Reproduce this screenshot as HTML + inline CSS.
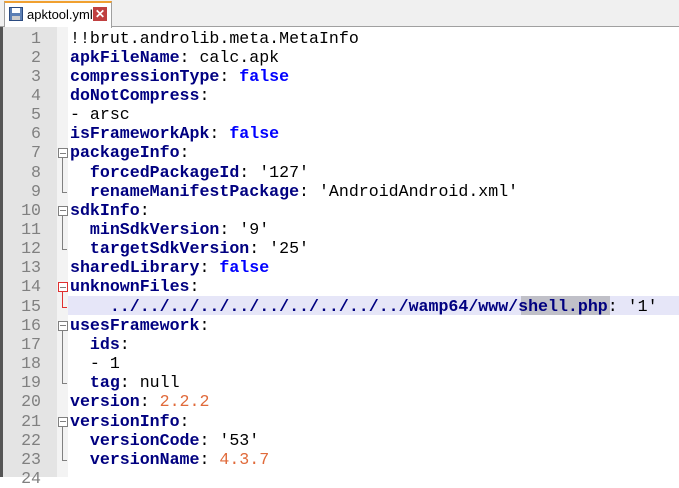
<!DOCTYPE html>
<html><head><style>
body{margin:0;width:679px;height:477px;overflow:hidden;background:#fff;position:relative;font-family:"Liberation Mono",monospace}
.tabbar{position:absolute;left:0;top:0;width:679px;height:26px;background:#f0f0f0;border-bottom:1px solid #a0a0a0}
.tab{position:absolute;left:4px;top:1px;width:106px;height:25px;background:#fff;border:1px solid #a0a0a0;border-bottom:none;border-top:2px solid #f0a030;font:13px "Liberation Sans",sans-serif}
.ed{position:absolute;left:0;top:27px;width:679px;height:450px;border-left:3px solid #555;box-sizing:border-box}
.gut{position:absolute;left:3px;top:27px;width:54px;height:450px;background:#e4e4e4}
.fold{position:absolute;left:57px;top:27px;width:11px;height:450px;background:#f3f3f3}
.ln{position:absolute;left:3px;width:38px;text-align:right;color:#808080;font-size:16.6px}
.tx{position:absolute;left:70px;font-size:16.6px;white-space:pre;color:#000}
.k{color:#000080;font-weight:bold}
.b{color:#0000ff;font-weight:bold}
.n{color:#e06a3a}
.fb{position:absolute;left:58px;width:8px;height:8px;border:1px solid #808080;background:#fff}
.fb::after{content:"";position:absolute;left:1px;top:3.5px;width:6px;height:1px;background:#808080}
.vl{position:absolute;left:62px;width:1px;background:#808080}
.hl{position:absolute;left:62px;width:5px;height:1px;background:#808080}
</style></head><body>
<div class="tabbar"><div class="tab">
<svg style="position:absolute;left:4px;top:4px" width="14" height="14"><rect x="0.5" y="0.5" width="13" height="13" fill="#5b7fb5" stroke="#2a4a80"/><rect x="3" y="1" width="8" height="5" fill="#fff"/><rect x="3" y="9" width="8" height="4" fill="#ccc"/></svg>
<span style="position:absolute;left:22px;top:4px">apktool.yml</span>
<span style="position:absolute;left:88px;top:4px;width:14px;height:14px;background:#c04040;color:#fff;font-size:12px;line-height:14px;text-align:center;font-weight:bold">✕</span>
</div></div>
<div class="ed"></div>
<div class="gut"></div><div class="fold"></div>
<div style="position:absolute;left:68px;top:296px;width:611px;height:19px;background:#e6e6f8"></div>
<div style="position:absolute;left:521px;top:296px;width:89px;height:19px;background:#c0c0c8"></div>
<div id="c"></div>
<script>
var L=[
'!!brut.androlib.meta.MetaInfo',
'<span class=k>apkFileName</span>: calc.apk',
'<span class=k>compressionType</span>: <span class=b>false</span>',
'<span class=k>doNotCompress</span>:',
'- arsc',
'<span class=k>isFrameworkApk</span>: <span class=b>false</span>',
'<span class=k>packageInfo</span>:',
'  <span class=k>forcedPackageId</span>: \'127\'',
'  <span class=k>renameManifestPackage</span>: \'AndroidAndroid.xml\'',
'<span class=k>sdkInfo</span>:',
'  <span class=k>minSdkVersion</span>: \'9\'',
'  <span class=k>targetSdkVersion</span>: \'25\'',
'<span class=k>sharedLibrary</span>: <span class=b>false</span>',
'<span class=k>unknownFiles</span>:',
'    <span class=k>../../../../../../../../../../wamp64/www/shell.php</span>: \'1\'',
'<span class=k>usesFramework</span>:',
'  <span class=k>ids</span>:',
'  - 1',
'  <span class=k>tag</span>: null',
'<span class=k>version</span>: <span class=n>2.2.2</span>',
'<span class=k>versionInfo</span>:',
'  <span class=k>versionCode</span>: \'53\'',
'  <span class=k>versionName</span>: <span class=n>4.3.7</span>',
''];
var h='';
for(var i=0;i<24;i++){var y=28.5+i*19.15;
h+='<div class=ln style="top:'+y+'px">'+(i+1)+'</div><div class=tx style="top:'+y+'px">'+L[i]+'</div>';}
function fy(i){return 28.5+i*19.15;}
[[6,8],[9,11],[13,14],[15,18],[20,22]].forEach(function(p){
var s=p[0],e=p[1],c=(s==13)?'#e03030':'#808080';
h+='<div class=fb style="top:'+(fy(s)+5)+'px;border-color:'+c+'"></div>';
h+='<div class=vl style="top:'+(fy(s)+15)+'px;height:'+(fy(e)+10-fy(s)-15)+'px;background:'+c+'"></div>';
h+='<div class=hl style="top:'+(fy(e)+10)+'px;background:'+c+'"></div>';});
document.getElementById('c').innerHTML=h;
</script>
</body></html>
